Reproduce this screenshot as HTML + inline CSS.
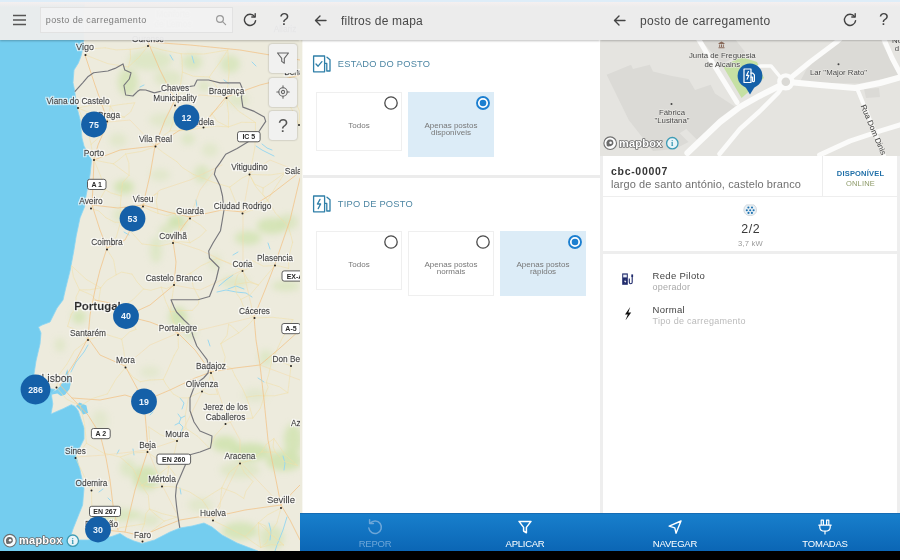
<!DOCTYPE html>
<html lang="pt">
<head>
<meta charset="utf-8">
<title>posto de carregamento</title>
<style>
*{box-sizing:border-box;margin:0;padding:0}
html,body{width:900px;height:560px;overflow:hidden;background:#000;font-family:"Liberation Sans",sans-serif;}
#app{position:relative;width:900px;height:560px;overflow:hidden;background:#000}
.panel{position:absolute;top:0;height:551px;overflow:hidden}
#p1{left:0;width:300px;background:#ecede1}
#p2{left:300px;width:300px;background:#fff}
#p3{left:600px;width:300px;background:#eeeeee}
.hdr{position:absolute;left:0;top:0;width:100%;height:40px;background:#ececec;box-shadow:0 1px 2px rgba(0,0,0,.25);z-index:5}
.hdr .t{position:absolute;top:13.5px;font-size:12px;color:#484848;letter-spacing:.22px;white-space:nowrap}
.topstrip{position:absolute;left:0;top:0;width:900px;height:2px;background:#deedf8;z-index:9}
.abs{position:absolute}
.bar{position:absolute;left:0;bottom:0;width:100%;height:38px;background:linear-gradient(#187fcc,#0b66b5);border-top:1px solid #166cb4;z-index:6}
.bar .b{position:absolute;top:-1px;width:150px;height:38px;text-align:center;color:#fff;font-size:9.5px;letter-spacing:-.25px}
.bar .b span{position:absolute;left:0;width:100%;top:25px;line-height:12px}
.bar .b svg{position:absolute;left:50%;top:5px;margin-left:-9px}
.sec-t{position:absolute;font-size:9.3px;color:#4d86a3;letter-spacing:.23px;white-space:nowrap}
.card{position:absolute;width:86px;background:#fff;border:1px solid #efefef;font-size:8px;color:#777;text-align:center;line-height:7px}
.card.sel{background:#dcecf7;border-color:#dcecf7}
.card svg{position:absolute;left:65.5px;top:2.2px}
.card .l{position:absolute;left:0;width:100%;top:28.5px}
.mlab{font-family:"Liberation Sans",sans-serif;fill:#2a2a2a;stroke:#2a2a2a;stroke-width:.3px;font-size:7.5px;text-anchor:middle}
.shield{font-family:"Liberation Sans",sans-serif;fill:#2a2a2a;font-size:7px;font-weight:bold;text-anchor:middle}
.cl{font-family:"Liberation Sans",sans-serif;fill:#eef5fc;font-size:8.8px;font-weight:bold;text-anchor:middle}
.fb{width:28px;height:29px;background:#f1f1f0;border-radius:3px;box-shadow:0 0 2px rgba(0,0,0,.35);text-align:center;z-index:4}
.fb svg{margin-top:7px}
</style>
</head>
<body>
<div id="app">
<div class="topstrip"></div>
<div class="abs" style="left:0;top:2px;width:900px;height:5px;background:linear-gradient(rgba(246,240,240,.9),rgba(240,236,236,0));z-index:9"></div>

<!-- PANEL 1 : MAP -->
<div class="panel" id="p1">
<svg class="abs" style="left:0;top:0" width="300" height="551" viewBox="0 0 300 551">
<defs><filter id="bl" x="-50%" y="-50%" width="200%" height="200%"><feGaussianBlur stdDeviation="3"/></filter><filter id="halo" x="-2%" y="-2%" width="104%" height="104%"><feMorphology in="SourceAlpha" operator="dilate" radius=".8" result="d"/><feGaussianBlur in="d" stdDeviation=".35" result="b"/><feFlood flood-color="#fff" flood-opacity=".8"/><feComposite in2="b" operator="in" result="h"/><feMerge><feMergeNode in="h"/><feMergeNode in="SourceGraphic"/></feMerge></filter></defs>
<rect width="300" height="551" fill="#edebdd"/>
<g filter="url(#bl)" fill="#cde2ab"><ellipse cx="150" cy="60" rx="22" ry="10" opacity="0.45"/><ellipse cx="192" cy="62" rx="10" ry="8" opacity="0.6"/><ellipse cx="230" cy="64" rx="10" ry="9" opacity="0.6"/><ellipse cx="128" cy="82" rx="10" ry="14" opacity="0.65"/><ellipse cx="168" cy="78" rx="14" ry="8" opacity="0.4"/><ellipse cx="204" cy="86" rx="6" ry="5" opacity="0.5"/><ellipse cx="165" cy="120" rx="16" ry="7" opacity="0.35"/><ellipse cx="238" cy="100" rx="10" ry="7" opacity="0.4"/><ellipse cx="118" cy="140" rx="9" ry="7" opacity="0.35"/><ellipse cx="124" cy="187" rx="10" ry="7" opacity="0.8"/><ellipse cx="202" cy="174" rx="8" ry="9" opacity="0.55"/><ellipse cx="188" cy="139" rx="7" ry="6" opacity="0.45"/><ellipse cx="160" cy="175" rx="10" ry="6" opacity="0.35"/><ellipse cx="177" cy="222" rx="9" ry="7" opacity="0.85"/><ellipse cx="166" cy="232" rx="7" ry="8" opacity="0.5"/><ellipse cx="156" cy="250" rx="6" ry="13" opacity="0.45"/><ellipse cx="248" cy="238" rx="13" ry="7" opacity="0.7"/><ellipse cx="272" cy="226" rx="15" ry="8" opacity="0.75"/><ellipse cx="288" cy="222" rx="10" ry="8" opacity="0.5"/><ellipse cx="235" cy="282" rx="14" ry="6" opacity="0.4"/><ellipse cx="286" cy="286" rx="14" ry="5" opacity="0.55"/><ellipse cx="178" cy="317" rx="9" ry="10" opacity="0.8"/><ellipse cx="190" cy="332" rx="6" ry="7" opacity="0.5"/><ellipse cx="266" cy="358" rx="7" ry="8" opacity="0.45"/><ellipse cx="215" cy="262" rx="6" ry="8" opacity="0.35"/><ellipse cx="79" cy="317" rx="7" ry="7" opacity="0.7"/><ellipse cx="60" cy="345" rx="5" ry="7" opacity="0.4"/><ellipse cx="120" cy="215" rx="7" ry="7" opacity="0.4"/><ellipse cx="100" cy="420" rx="8" ry="10" opacity="0.3"/><ellipse cx="150" cy="372" rx="10" ry="6" opacity="0.3"/><ellipse cx="210" cy="150" rx="8" ry="7" opacity="0.35"/><ellipse cx="146" cy="478" rx="13" ry="12" opacity="0.8"/><ellipse cx="128" cy="468" rx="8" ry="9" opacity="0.45"/><ellipse cx="118" cy="515" rx="24" ry="6" opacity="0.6"/><ellipse cx="150" cy="520" rx="10" ry="6" opacity="0.4"/><ellipse cx="225" cy="444" rx="13" ry="8" opacity="0.8"/><ellipse cx="250" cy="452" rx="20" ry="9" opacity="0.85"/><ellipse cx="284" cy="461" rx="18" ry="10" opacity="0.8"/><ellipse cx="293" cy="440" rx="9" ry="16" opacity="0.75"/><ellipse cx="240" cy="470" rx="20" ry="8" opacity="0.4"/><ellipse cx="240" cy="531" rx="18" ry="9" opacity="0.7"/><ellipse cx="272" cy="538" rx="12" ry="12" opacity="0.55"/><ellipse cx="200" cy="505" rx="12" ry="7" opacity="0.35"/><ellipse cx="255" cy="395" rx="12" ry="7" opacity="0.3"/></g>
<path d="M-3.0 -3.0 L84.0 -3.0 L83.7 40.0 L83.0 48.0 L81.0 56.0 L78.4 63.0 L74.0 70.0 L73.0 82.6 L74.8 91.6 L75.7 100.5 L77.5 109.4 L80.2 120.0 L82.0 138.0 L84.0 146.0 L91.6 160.0 L90.0 175.0 L88.0 186.0 L86.0 196.0 L84.6 206.7 L80.0 218.0 L76.2 236.0 L73.6 252.0 L70.0 271.0 L65.5 289.0 L63.0 300.0 L57.0 308.0 L50.0 322.0 L42.0 325.0 L38.5 327.0 L41.0 333.0 L40.0 344.0 L36.0 361.0 L34.0 374.0 L36.0 383.0 L46.0 388.0 L55.0 389.5 L52.0 393.0 L51.6 396.0 L52.8 404.0 L51.0 414.0 L63.2 408.7 L71.3 404.7 L75.0 406.4 L78.3 411.0 L80.6 418.0 L84.0 428.0 L84.0 439.0 L79.0 449.0 L75.7 455.3 L79.8 469.0 L84.0 488.5 L82.6 505.0 L77.0 519.0 L73.0 529.0 L70.5 536.5 L75.0 540.0 L88.0 540.0 L100.0 538.0 L111.0 536.7 L120.0 533.5 L127.0 538.0 L134.0 541.0 L142.0 543.5 L154.5 540.0 L170.0 532.0 L180.0 528.0 L192.0 526.0 L204.0 523.0 L212.0 527.0 L222.0 535.0 L237.0 543.0 L250.0 548.0 L258.0 551.0 L259.0 555.0 L-3.0 555.0Z" fill="#74cdef" stroke="#8ad4f2" stroke-width=".8" stroke-linejoin="round"/>
<g fill="#7fd0f0"><path d="M51.6 392.5 L56.2 390 L60.3 386 L63.8 379.7 L67.3 369.3 L68.4 374 L70.7 383.2 L69.6 389 L65 394.8 L60.9 396 L57.4 393.5 L52 394.5Z"/><path d="M76 406 L79.4 402.5 L86.4 405.5 L88 413 L83 414.5 L80 410Z"/></g>
<g fill="none" stroke="#9bd8ef" stroke-width="1" stroke-linecap="round" stroke-linejoin="round"><path d="M217.0 292.0 L226.0 290.0 L236.0 292.0 L246.0 293.0 L252.0 297.0"/><path d="M219.0 286.0 L226.0 280.0 L233.0 275.0"/><path d="M256.0 146.0 L262.0 150.0 L268.0 153.0 L274.0 156.0"/><path d="M287.0 517.0 L283.0 530.0 L277.0 545.0 L275.0 551.0"/><path d="M180.0 398.0 L184.0 403.0 L182.0 409.0"/><path d="M178.0 414.0 L181.0 418.0 L179.0 423.0 L183.0 427.0 L181.0 432.0"/><path d="M181.0 418.0 L185.0 416.0"/><path d="M179.0 423.0 L175.0 425.0"/><path d="M133.0 449.0 L134.0 455.0"/><path d="M108.0 498.0 L111.0 501.0"/><path d="M180.0 488.0 L181.0 494.0"/><path d="M258.0 378.0 L264.0 382.0"/><path d="M262.0 144.0 L267.0 148.0 L272.0 150.0"/><path d="M283.0 456.0 L285.0 463.0 L284.0 470.0"/><path d="M228.0 289.0 L236.0 286.0 L244.0 289.0"/><path d="M268.0 243.0 L270.0 249.0"/><path d="M124.0 232.0 L129.0 235.0"/><path d="M192.0 56.0 L194.0 63.0"/><path d="M140.0 87.0 L144.0 85.0"/><path d="M269.0 523.0 L271.0 531.0 L270.0 540.0"/><path d="M71.0 372.0 L76.0 362.0 L84.0 352.0 L88.0 345.0"/><path d="M99.0 492.0 L103.0 489.0"/><path d="M117.0 454.0 L119.0 450.0"/><path d="M150.0 415.0 L153.0 412.0"/><path d="M208.0 340.0 L210.0 346.0"/><path d="M233.0 255.0 L238.0 252.0"/><path d="M196.0 200.0 L197.0 207.0"/><path d="M224.0 80.0 L229.0 84.0"/><path d="M252.0 62.0 L256.0 66.0"/><path d="M170.0 55.0 L173.0 60.0"/></g>
<g fill="none" stroke="#f1dfa6" stroke-width=".6" stroke-linejoin="round" stroke-linecap="round" opacity=".9"><path d="M85.5 55.0 L92.8 48.7 L105.1 47.8"/><path d="M85.5 55.0 L107.8 63.7 L128.4 66.9"/><path d="M148.0 46.0 L141.1 48.0 L130.2 49.3"/><path d="M148.0 46.0 L139.0 57.2 L128.4 66.9"/><path d="M78.0 108.0 L91.0 113.3 L107.0 121.5"/><path d="M78.0 108.0 L93.9 104.5 L110.3 106.2"/><path d="M78.0 108.0 L87.2 128.6 L91.1 144.4"/><path d="M107.0 121.5 L109.6 111.2 L110.3 106.2"/><path d="M107.0 121.5 L117.0 117.8 L124.2 117.1"/><path d="M175.0 105.5 L174.6 116.6 L170.0 130.9"/><path d="M175.0 105.5 L180.2 87.2 L182.4 72.1"/><path d="M226.5 98.0 L221.9 105.5 L211.7 113.1"/><path d="M226.5 98.0 L217.2 87.4 L209.2 77.0"/><path d="M226.5 98.0 L228.6 114.0 L228.4 126.9"/><path d="M203.5 127.5 L208.4 118.5 L211.7 113.1"/><path d="M203.5 127.5 L216.6 126.2 L228.4 126.9"/><path d="M203.5 127.5 L187.7 130.4 L170.0 130.9"/><path d="M155.5 146.5 L163.2 135.8 L170.0 130.9"/><path d="M155.5 146.5 L163.6 152.8 L177.0 161.8"/><path d="M155.5 146.5 L141.6 151.4 L125.7 154.0"/><path d="M94.0 160.0 L92.5 153.5 L91.1 144.4"/><path d="M94.0 160.0 L102.4 161.7 L113.3 163.8"/><path d="M94.0 160.0 L101.3 177.8 L105.5 189.7"/><path d="M249.5 174.5 L254.5 184.1 L263.2 188.0"/><path d="M249.5 174.5 L242.2 177.9 L229.7 187.1"/><path d="M249.5 174.5 L251.9 163.1 L254.8 147.8"/><path d="M299.0 125.0 L299.9 112.0 L294.8 100.3"/><path d="M299.0 125.0 L293.5 112.2 L283.0 94.3"/><path d="M91.0 208.5 L98.8 210.9 L105.6 217.5"/><path d="M91.0 208.5 L98.4 201.8 L105.5 189.7"/><path d="M143.0 206.5 L151.1 210.7 L158.0 213.3"/><path d="M143.0 206.5 L149.1 197.5 L157.8 193.2"/><path d="M190.0 218.5 L183.1 225.1 L179.3 226.9"/><path d="M190.0 218.5 L181.9 213.0 L174.1 213.3"/><path d="M242.5 213.5 L257.8 208.0 L267.6 200.3"/><path d="M242.5 213.5 L235.5 201.7 L229.7 187.1"/><path d="M173.0 243.0 L180.6 241.7 L190.0 242.7"/><path d="M173.0 243.0 L178.2 231.9 L179.3 226.9"/><path d="M107.0 249.5 L113.6 259.9 L116.2 274.8"/><path d="M107.0 249.5 L116.3 237.1 L120.5 222.2"/><path d="M275.0 265.5 L280.6 266.3 L288.7 268.5"/><path d="M275.0 265.5 L263.3 266.2 L252.9 260.8"/><path d="M275.0 265.5 L267.3 274.4 L258.5 285.0"/><path d="M242.5 271.0 L249.2 268.0 L252.9 260.8"/><path d="M242.5 271.0 L237.5 274.9 L235.0 284.3"/><path d="M174.0 285.0 L166.3 288.7 L161.2 287.2"/><path d="M174.0 285.0 L180.9 277.7 L190.8 273.1"/><path d="M174.0 285.0 L172.3 296.5 L170.4 311.8"/><path d="M254.5 318.0 L248.4 325.0 L238.8 332.8"/><path d="M254.5 318.0 L244.8 310.3 L240.8 299.4"/><path d="M178.0 335.0 L178.5 347.9 L174.0 355.6"/><path d="M178.0 335.0 L174.5 324.7 L170.4 311.8"/><path d="M88.0 340.0 L98.3 336.2 L103.5 333.5"/><path d="M88.0 340.0 L78.5 331.0 L67.6 326.3"/><path d="M125.5 367.5 L132.8 377.1 L140.3 381.7"/><path d="M125.5 367.5 L123.9 351.4 L121.7 339.2"/><path d="M211.0 373.0 L216.4 367.8 L223.7 365.0"/><path d="M211.0 373.0 L207.9 385.1 L202.0 391.5"/><path d="M291.0 366.0 L280.9 361.7 L271.9 360.6"/><path d="M291.0 366.0 L289.3 380.4 L287.8 392.8"/><path d="M56.5 387.5 L59.7 373.8 L66.9 364.1"/><path d="M56.5 387.5 L66.6 399.2 L80.2 405.9"/><path d="M202.0 391.5 L195.5 394.4 L188.4 397.9"/><path d="M202.0 391.5 L208.8 394.5 L217.6 394.3"/><path d="M225.5 424.0 L237.0 419.2 L252.8 418.1"/><path d="M225.5 424.0 L215.2 435.4 L209.8 448.6"/><path d="M177.0 441.0 L180.4 433.9 L186.0 428.4"/><path d="M177.0 441.0 L174.7 452.0 L168.7 466.5"/><path d="M147.5 452.0 L149.6 438.9 L148.7 426.9"/><path d="M147.5 452.0 L157.6 459.4 L168.7 466.5"/><path d="M75.5 458.0 L79.6 452.1 L86.4 443.2"/><path d="M75.5 458.0 L83.5 474.7 L91.5 490.5"/><path d="M240.0 463.5 L244.3 472.5 L253.0 481.5"/><path d="M240.0 463.5 L251.6 459.9 L261.7 451.9"/><path d="M91.5 490.5 L91.9 511.0 L97.1 526.7"/><path d="M162.0 486.5 L168.7 486.5 L176.6 487.2"/><path d="M162.0 486.5 L154.5 488.0 L141.6 485.3"/><path d="M281.0 508.0 L267.5 514.9 L258.4 522.7"/><path d="M281.0 508.0 L276.9 523.0 L269.5 534.4"/><path d="M213.0 520.5 L207.6 507.7 L202.3 500.1"/><path d="M213.0 520.5 L220.0 506.8 L221.8 487.9"/><path d="M213.0 520.5 L229.2 528.3 L245.0 536.5"/><path d="M142.5 541.5 L141.9 530.3 L144.4 523.8"/><path d="M142.5 541.5 L151.3 531.4 L164.3 521.1"/><path d="M124.2 117.1 L114.9 113.6 L110.3 106.2"/><path d="M124.2 117.1 L130.6 112.0 L134.7 102.8"/><path d="M209.2 77.0 L193.3 76.2 L182.4 72.1"/><path d="M179.3 226.9 L178.4 218.5 L174.1 213.3"/><path d="M190.0 242.7 L185.6 233.6 L179.3 226.9"/><path d="M293.8 63.8 L289.2 79.2 L283.0 94.3"/><path d="M293.8 63.8 L294.0 83.7 L294.8 100.3"/><path d="M263.2 188.0 L262.8 194.3 L267.6 200.3"/><path d="M120.2 457.0 L132.0 453.1 L147.5 452.0"/><path d="M120.2 457.0 L132.7 468.2 L141.6 485.3"/><path d="M120.2 457.0 L103.5 453.1 L86.4 443.2"/><path d="M206.1 230.3 L200.8 225.3 L190.0 218.5"/><path d="M206.1 230.3 L200.4 236.4 L190.0 242.7"/><path d="M182.4 72.1 L182.1 60.1 L181.2 53.8"/><path d="M216.9 258.5 L230.9 263.6 L242.5 271.0"/><path d="M216.9 258.5 L201.0 265.8 L190.8 273.1"/><path d="M121.7 339.2 L129.7 331.8 L136.0 329.4"/><path d="M121.7 339.2 L110.9 335.9 L103.5 333.5"/><path d="M157.8 193.2 L156.3 200.4 L158.0 213.3"/><path d="M246.5 397.2 L256.8 395.6 L264.5 395.8"/><path d="M246.5 397.2 L249.0 404.7 L252.8 418.1"/><path d="M176.6 487.2 L174.7 474.2 L168.7 466.5"/><path d="M176.6 487.2 L189.4 491.8 L202.3 500.1"/><path d="M294.8 100.3 L288.7 95.9 L283.0 94.3"/><path d="M148.7 426.9 L160.5 434.7 L177.0 441.0"/><path d="M79.5 289.9 L76.0 297.1 L76.2 307.6"/><path d="M79.5 289.9 L89.6 289.8 L100.7 287.8"/><path d="M79.5 289.9 L91.9 295.1 L99.0 304.5"/><path d="M238.8 332.8 L231.0 325.7 L228.6 324.4"/><path d="M238.8 332.8 L230.4 337.8 L220.8 343.7"/><path d="M267.6 200.3 L255.9 186.8 L249.5 174.5"/><path d="M220.8 343.7 L227.0 335.4 L228.6 324.4"/><path d="M220.8 343.7 L225.2 356.9 L223.7 365.0"/><path d="M190.8 273.1 L193.2 286.6 L199.3 298.3"/><path d="M258.4 522.7 L265.4 525.8 L269.5 534.4"/><path d="M258.4 522.7 L252.7 528.9 L245.0 536.5"/><path d="M258.4 522.7 L258.8 534.1 L260.7 547.5"/><path d="M163.3 379.4 L165.9 384.2 L173.2 394.0"/><path d="M163.3 379.4 L149.3 380.1 L140.3 381.7"/><path d="M141.6 485.3 L148.3 495.4 L149.4 509.0"/><path d="M141.6 485.3 L154.3 477.8 L168.7 466.5"/><path d="M253.0 481.5 L245.9 491.2 L243.8 498.4"/><path d="M100.7 287.8 L99.0 298.7 L99.0 304.5"/><path d="M100.7 287.8 L106.6 280.5 L116.2 274.8"/><path d="M193.2 174.3 L182.3 167.5 L177.0 161.8"/><path d="M193.2 174.3 L213.3 182.3 L229.7 187.1"/><path d="M136.0 329.4 L129.6 316.9 L124.8 304.9"/><path d="M287.8 392.8 L274.7 395.8 L264.5 395.8"/><path d="M287.8 392.8 L279.5 386.8 L266.3 382.6"/><path d="M174.0 355.6 L167.7 370.2 L163.3 379.4"/><path d="M273.9 438.6 L273.1 446.6 L275.3 452.1"/><path d="M273.9 438.6 L266.7 443.9 L261.7 451.9"/><path d="M142.0 243.9 L132.6 233.6 L120.5 222.2"/><path d="M142.0 243.9 L159.3 246.1 L173.0 243.0"/><path d="M66.9 364.1 L74.6 350.5 L88.0 340.0"/><path d="M128.4 66.9 L130.6 57.9 L130.2 49.3"/><path d="M105.6 217.5 L114.8 222.3 L120.5 222.2"/><path d="M134.7 102.8 L120.3 104.5 L110.3 106.2"/><path d="M260.7 547.5 L266.9 542.4 L269.5 534.4"/><path d="M260.7 547.5 L254.8 543.6 L245.0 536.5"/><path d="M161.2 287.2 L150.8 290.3 L143.5 289.0"/><path d="M161.2 287.2 L165.6 301.2 L170.4 311.8"/><path d="M129.1 175.3 L118.7 167.7 L113.3 163.8"/><path d="M129.1 175.3 L128.9 163.1 L125.7 154.0"/><path d="M129.1 175.3 L122.5 182.8 L121.1 195.9"/><path d="M255.5 122.5 L255.4 133.1 L254.8 147.8"/><path d="M255.5 122.5 L241.5 122.3 L228.4 126.9"/><path d="M255.5 122.5 L238.4 111.0 L226.5 98.0"/><path d="M181.2 53.8 L162.2 49.9 L148.0 46.0"/><path d="M264.5 395.8 L268.2 387.2 L266.3 382.6"/><path d="M125.7 154.0 L119.0 159.6 L113.3 163.8"/><path d="M261.7 451.9 L266.9 452.2 L275.3 452.1"/><path d="M252.8 418.1 L260.2 408.6 L264.5 395.8"/><path d="M99.0 304.5 L86.3 306.5 L76.2 307.6"/><path d="M107.4 393.9 L92.3 398.5 L80.2 405.9"/><path d="M107.4 393.9 L116.1 378.8 L125.5 367.5"/><path d="M288.7 268.5 L288.6 257.7 L292.6 242.3"/><path d="M283.6 544.9 L274.7 537.0 L269.5 534.4"/><path d="M283.6 544.9 L270.7 544.7 L260.7 547.5"/><path d="M283.6 544.9 L271.2 534.7 L258.4 522.7"/><path d="M288.3 226.3 L291.4 237.2 L292.6 242.3"/><path d="M288.3 226.3 L275.6 213.2 L267.6 200.3"/><path d="M91.1 144.4 L101.1 135.5 L107.0 121.5"/><path d="M202.3 500.1 L214.3 492.4 L221.8 487.9"/><path d="M258.5 285.0 L248.6 280.8 L242.5 271.0"/><path d="M258.5 285.0 L250.1 294.8 L240.8 299.4"/><path d="M209.8 448.6 L198.0 436.6 L186.0 428.4"/><path d="M235.0 284.3 L236.5 293.5 L240.8 299.4"/><path d="M235.0 284.3 L249.4 282.3 L258.5 285.0"/><path d="M86.4 443.2 L84.5 423.7 L80.2 405.9"/><path d="M144.4 523.8 L145.9 513.6 L149.4 509.0"/><path d="M228.4 126.9 L217.3 121.4 L211.7 113.1"/><path d="M176.9 517.1 L172.5 518.5 L164.3 521.1"/><path d="M176.9 517.1 L162.4 513.7 L149.4 509.0"/><path d="M105.5 189.7 L110.5 192.8 L121.1 195.9"/><path d="M132.0 274.1 L121.5 272.1 L116.2 274.8"/><path d="M132.0 274.1 L137.1 281.9 L143.5 289.0"/><path d="M149.4 509.0 L157.0 515.9 L164.3 521.1"/><path d="M170.4 311.8 L182.5 310.5 L192.3 310.4"/><path d="M124.8 304.9 L133.0 299.7 L143.5 289.0"/><path d="M124.8 304.9 L110.7 305.1 L99.0 304.5"/><path d="M67.6 326.3 L71.4 314.1 L76.2 307.6"/><path d="M186.0 428.4 L185.4 414.5 L188.4 397.9"/><path d="M199.3 298.3 L198.4 304.0 L192.3 310.4"/><path d="M173.2 394.0 L180.3 397.9 L188.4 397.9"/><path d="M221.8 487.9 L235.1 492.9 L243.8 498.4"/><path d="M221.8 487.9 L228.9 472.8 L240.0 463.5"/><path d="M285.0 172.7 L271.9 182.2 L263.2 188.0"/><path d="M285.0 172.7 L275.7 186.9 L267.6 200.3"/><path d="M285.0 172.7 L269.8 175.0 L249.5 174.5"/><path d="M71.6 265.9 L73.4 276.6 L79.5 289.9"/><path d="M71.6 265.9 L86.3 279.4 L100.7 287.8"/><path d="M97.1 526.7 L118.5 527.9 L144.4 523.8"/><path d="M297.4 465.4 L283.6 461.3 L275.3 452.1"/><path d="M297.4 465.4 L284.9 454.4 L273.9 438.6"/><path d="M174.1 213.3 L167.1 215.6 L158.0 213.3"/><path d="M227.8 50.0 L220.2 61.8 L209.2 77.0"/><path d="M227.8 50.0 L203.9 54.0 L181.2 53.8"/><path d="M227.8 50.0 L229.1 72.1 L226.5 98.0"/><path d="M105.1 47.8 L116.2 49.9 L130.2 49.3"/><path d="M168.7 466.5 L167.4 477.5 L162.0 486.5"/><path d="M223.7 365.0 L231.5 368.2 L235.1 376.0"/><path d="M266.3 382.6 L268.9 373.7 L271.9 360.6"/><path d="M292.9 319.6 L272.5 317.3 L254.5 318.0"/><path d="M292.9 319.6 L281.7 339.3 L271.9 360.6"/><path d="M120.5 222.2 L120.4 206.2 L121.1 195.9"/><path d="M120.5 222.2 L132.5 214.3 L143.0 206.5"/><path d="M235.1 376.0 L242.4 388.3 L246.5 397.2"/><path d="M217.6 394.3 L213.7 381.0 L211.0 373.0"/></g>
<g fill="none" stroke="#f4dcae" stroke-width=".6" stroke-linejoin="round" stroke-linecap="round"><path d="M108.0 122.0 L130.0 120.0 L155.0 146.0"/><path d="M175.0 100.0 L200.0 95.0 L226.0 97.0"/><path d="M173.0 241.0 L200.0 250.0 L243.0 270.0 L254.0 317.0"/><path d="M174.0 285.0 L200.0 290.0 L243.0 270.0"/><path d="M178.0 333.0 L200.0 330.0 L254.0 317.0"/><path d="M148.0 450.0 L178.0 440.0 L203.0 390.0"/><path d="M148.0 450.0 L162.0 485.0 L180.0 520.0"/><path d="M76.0 457.0 L105.0 455.0 L148.0 450.0"/><path d="M92.0 488.0 L110.0 480.0"/><path d="M243.0 212.0 L243.0 270.0"/><path d="M226.0 414.0 L240.0 440.0 L240.0 462.0 L213.0 517.0"/><path d="M211.0 372.0 L226.0 414.0"/><path d="M240.0 462.0 L281.0 505.0"/><path d="M260.0 365.0 L300.0 380.0"/><path d="M125.0 366.0 L150.0 345.0 L178.0 333.0"/><path d="M143.0 205.0 L160.0 190.0 L190.0 180.0 L222.0 165.0"/><path d="M190.0 217.0 L200.0 190.0 L215.0 170.0"/><path d="M250.0 173.0 L270.0 160.0 L300.0 172.0"/><path d="M250.0 173.0 L243.0 212.0"/></g>
<g fill="none" stroke="#f2c58c" stroke-width=".9" stroke-linejoin="round" stroke-linecap="round" opacity=".9"><path d="M85.0 55.0 L95.0 85.0 L108.0 122.0 L98.0 145.0 L94.0 160.0"/><path d="M94.0 160.0 L93.0 185.0 L92.0 205.0 L100.0 230.0 L107.0 248.0 L100.0 270.0 L95.0 290.0 L90.0 315.0 L88.0 338.0 L75.0 362.0 L60.0 385.0"/><path d="M92.0 205.0 L118.0 208.0 L143.0 205.0 L168.0 212.0 L190.0 217.0 L222.0 210.0 L243.0 212.0 L270.0 195.0 L300.0 172.0"/><path d="M95.0 300.0 L110.0 303.0 L126.0 316.0 L150.0 305.0 L174.0 285.0 L176.0 262.0 L173.0 241.0 L182.0 228.0 L190.0 217.0"/><path d="M60.0 385.0 L72.0 398.0 L88.0 415.0 L100.0 434.0 L106.0 458.0 L110.0 480.0 L113.0 505.0 L118.0 530.0"/><path d="M85.0 528.0 L105.0 530.0 L125.0 532.0 L142.0 536.0 L160.0 528.0 L180.0 520.0 L198.0 517.0 L213.0 517.0 L245.0 510.0 L281.0 505.0"/><path d="M72.0 398.0 L100.0 400.0 L125.0 395.0 L144.0 401.0 L170.0 390.0 L195.0 378.0 L211.0 372.0 L235.0 368.0 L260.0 365.0 L280.0 348.0 L300.0 330.0"/><path d="M94.0 160.0 L120.0 150.0 L155.0 146.0 L180.0 130.0 L203.0 125.0 L226.0 97.0"/><path d="M143.0 205.0 L150.0 175.0 L155.0 146.0 L165.0 120.0 L175.0 100.0 L160.0 70.0 L148.0 42.0"/><path d="M281.0 505.0 L274.0 470.0 L268.0 440.0 L264.0 400.0 L260.0 365.0 L256.0 340.0 L254.0 317.0 L265.0 290.0 L275.0 264.0 L290.0 220.0 L300.0 178.0"/><path d="M126.0 316.0 L150.0 322.0 L178.0 333.0 L195.0 350.0 L211.0 372.0"/><path d="M144.0 401.0 L146.0 425.0 L148.0 450.0 L135.0 490.0 L125.0 532.0"/><path d="M107.0 248.0 L125.0 240.0 L143.0 205.0"/><path d="M88.0 338.0 L100.0 355.0 L125.0 366.0 L144.0 401.0"/><path d="M281.0 505.0 L295.0 490.0 L300.0 485.0"/><path d="M281.0 505.0 L290.0 520.0 L300.0 540.0"/><path d="M226.0 97.0 L260.0 85.0 L300.0 75.0"/><path d="M148.0 42.0 L190.0 45.0 L240.0 50.0 L300.0 60.0"/></g>
<path d="M74.8 91.6 L82.9 82.6 L88.2 76.4 L93.6 72.8 L107.9 71.0 L115.0 68.4 L123.0 63.9 L124.8 70.0 L131.0 72.8 L129.3 79.0 L123.9 85.3 L125.7 95.0 L132.9 96.0 L137.3 91.6 L140.0 89.8 L145.7 90.0 L154.3 92.9 L165.7 90.0 L185.7 87.1 L194.3 85.7 L197.1 80.0 L208.6 80.0 L220.0 82.9 L240.0 82.9 L242.9 90.0 L241.4 97.1 L242.9 107.1 L254.3 111.4 L264.3 117.1 L265.7 121.4 L257.1 134.3 L248.6 141.4 L237.1 148.6 L225.7 154.3 L220.0 162.9 L215.7 168.6 L214.3 174.3 L220.0 185.7 L222.5 196.0 L224.0 210.0 L222.0 222.0 L220.5 230.7 L213.0 243.0 L208.7 251.0 L209.5 258.0 L219.0 267.5 L216.0 280.0 L209.5 296.5 L198.0 299.7 L171.0 299.7 L174.0 307.0 L176.5 312.0 L184.0 320.0 L190.0 325.7 L193.0 336.0 L196.8 346.0 L202.0 353.0 L207.0 359.7 L209.0 367.0 L208.0 373.0 L203.6 378.0 L197.0 383.0 L193.4 389.0 L190.0 398.0 L190.0 410.7 L194.0 422.0 L200.0 431.0 L212.0 436.0 L211.5 442.0 L210.4 448.0 L200.0 452.0 L190.0 454.8 L184.0 468.0 L176.5 485.4 L175.5 496.0 L176.5 505.7 L178.0 517.0 L179.8 527.8" fill="none" stroke="#77777c" stroke-width="1.15" stroke-linejoin="round"/>
<g fill="#222"><circle cx="85.5" cy="55" r="1"/><circle cx="148" cy="46" r="1"/><circle cx="78" cy="108" r="1"/><circle cx="107" cy="121.5" r="1"/><circle cx="175" cy="105.5" r="1"/><circle cx="226.5" cy="98" r="1"/><circle cx="203.5" cy="127.5" r="1"/><circle cx="155.5" cy="146.5" r="1"/><circle cx="94" cy="160" r="1"/><circle cx="249.5" cy="174.5" r="1"/><circle cx="299" cy="125" r="1"/><circle cx="91" cy="208.5" r="1"/><circle cx="143" cy="206.5" r="1"/><circle cx="190" cy="218.5" r="1"/><circle cx="242.5" cy="213.5" r="1"/><circle cx="173" cy="243" r="1"/><circle cx="107" cy="249.5" r="1"/><circle cx="275" cy="265.5" r="1"/><circle cx="242.5" cy="271" r="1"/><circle cx="174" cy="285" r="1"/><circle cx="254.5" cy="318" r="1"/><circle cx="178" cy="335" r="1"/><circle cx="88" cy="340" r="1"/><circle cx="125.5" cy="367.5" r="1"/><circle cx="211" cy="373" r="1"/><circle cx="291" cy="366" r="1"/><circle cx="56.5" cy="387.5" r="1"/><circle cx="202" cy="391.5" r="1"/><circle cx="225.5" cy="424" r="1"/><circle cx="177" cy="441" r="1"/><circle cx="147.5" cy="452" r="1"/><circle cx="75.5" cy="458" r="1"/><circle cx="240" cy="463.5" r="1"/><circle cx="91.5" cy="490.5" r="1"/><circle cx="162" cy="486.5" r="1"/><circle cx="281" cy="508" r="1"/><circle cx="213" cy="520.5" r="1"/><circle cx="142.5" cy="541.5" r="1"/></g>
<g filter="url(#halo)">
<text class="mlab" x="85" y="50" style="font-size:9px">Vigo</text>
<text class="mlab" x="173" y="17" style="font-size:8.5px">Monforte</text>
<text class="mlab" x="173" y="27" style="font-size:8.5px">de Lemos</text>
<text class="mlab" x="285" y="32" style="font-size:8.3px">Allariz</text>
<text class="mlab" x="148" y="42" style="font-size:8.3px">Ourense</text>
<text class="mlab" x="78" y="103.5" style="font-size:8.3px">Viana do Castelo</text>
<text class="mlab" x="109" y="118" style="font-size:8.3px">Braga</text>
<text class="mlab" x="175" y="90.5" style="font-size:8.3px">Chaves</text>
<text class="mlab" x="175" y="100.5" style="font-size:8.3px">Municipality</text>
<text class="mlab" x="226.5" y="93.5" style="font-size:8.3px">Bragança</text>
<text class="mlab" x="196" y="124.5" style="font-size:8.3px">Mirandela</text>
<text class="mlab" x="155.5" y="142" style="font-size:8.3px">Vila Real</text>
<text class="mlab" x="94" y="155.5" style="font-size:8.5px">Porto</text>
<text class="mlab" x="249.5" y="170" style="font-size:8.3px">Vitigudino</text>
<text class="mlab" x="306" y="173.5" style="font-size:8.5px">Salamanca</text>
<text class="mlab" x="304" y="75" style="font-size:8.3px">Benavente</text>
<text class="mlab" x="91" y="204" style="font-size:8.3px">Aveiro</text>
<text class="mlab" x="143" y="202" style="font-size:8.3px">Viseu</text>
<text class="mlab" x="190" y="214" style="font-size:8.3px">Guarda</text>
<text class="mlab" x="242.5" y="209" style="font-size:8.3px">Ciudad Rodrigo</text>
<text class="mlab" x="173" y="238.5" style="font-size:8.3px">Covilhã</text>
<text class="mlab" x="107" y="245" style="font-size:8.3px">Coimbra</text>
<text class="mlab" x="275" y="261" style="font-size:8.3px">Plasencia</text>
<text class="mlab" x="242.5" y="266.5" style="font-size:8.3px">Coria</text>
<text class="mlab" x="174" y="280.5" style="font-size:8.3px">Castelo Branco</text>
<text class="mlab" x="97.5" y="309.5" style="font-size:11.5px;font-weight:bold">Portugal</text>
<text class="mlab" x="254.5" y="313.5" style="font-size:8.3px">Cáceres</text>
<text class="mlab" x="178" y="330.5" style="font-size:8.3px">Portalegre</text>
<text class="mlab" x="88" y="335.5" style="font-size:8.3px">Santarém</text>
<text class="mlab" x="125.5" y="363" style="font-size:8.3px">Mora</text>
<text class="mlab" x="211" y="368.5" style="font-size:8.3px">Badajoz</text>
<text class="mlab" x="293" y="361.5" style="font-size:8.3px">Don Benito</text>
<text class="mlab" x="57" y="382" style="font-size:10.5px">Lisbon</text>
<text class="mlab" x="202" y="387" style="font-size:8.3px">Olivenza</text>
<text class="mlab" x="225.5" y="410" style="font-size:8.3px">Jerez de los</text>
<text class="mlab" x="225.5" y="419.5" style="font-size:8.3px">Caballeros</text>
<text class="mlab" x="305" y="426" style="font-size:8.3px">Azuaga</text>
<text class="mlab" x="177" y="436.5" style="font-size:8.3px">Moura</text>
<text class="mlab" x="147.5" y="447.5" style="font-size:8.3px">Beja</text>
<text class="mlab" x="75.5" y="453.5" style="font-size:8.3px">Sines</text>
<text class="mlab" x="240" y="459" style="font-size:8.3px">Aracena</text>
<text class="mlab" x="91.5" y="486" style="font-size:8.3px">Odemira</text>
<text class="mlab" x="162" y="482" style="font-size:8.3px">Mértola</text>
<text class="mlab" x="281" y="502.5" style="font-size:9.5px">Seville</text>
<text class="mlab" x="213" y="516" style="font-size:8.3px">Huelva</text>
<text class="mlab" x="142.5" y="537.5" style="font-size:8.3px">Faro</text>
<text class="mlab" x="101.5" y="527" style="font-size:8.3px">Portimão</text>
</g>
<rect x="87.5" y="179.3" width="18.5" height="10.2" rx="2.2" fill="#fff" stroke="#4c4c4c" stroke-width=".9"/><text class="shield" x="96.7" y="186.9">A 1</text>
<rect x="237.5" y="131.6" width="22.6" height="10.2" rx="2.2" fill="#fff" stroke="#4c4c4c" stroke-width=".9"/><text class="shield" x="248.8" y="139.2">IC 5</text>
<rect x="282.0" y="270.9" width="26" height="10.2" rx="2.2" fill="#fff" stroke="#4c4c4c" stroke-width=".9"/><text class="shield" x="295" y="278.5">EX-A</text>
<rect x="281.8" y="323.5" width="18.5" height="10.2" rx="2.2" fill="#fff" stroke="#4c4c4c" stroke-width=".9"/><text class="shield" x="291" y="331.1">A-5</text>
<rect x="91.4" y="428.5" width="18.8" height="10.2" rx="2.2" fill="#fff" stroke="#4c4c4c" stroke-width=".9"/><text class="shield" x="100.8" y="436.1">A 2</text>
<rect x="156.9" y="454.1" width="33.7" height="10.2" rx="2.2" fill="#fff" stroke="#4c4c4c" stroke-width=".9"/><text class="shield" x="173.75" y="461.7">EN 260</text>
<rect x="89.5" y="506.3" width="31" height="10.2" rx="2.2" fill="#fff" stroke="#4c4c4c" stroke-width=".9"/><text class="shield" x="105" y="513.9">EN 267</text>
<circle cx="94" cy="124.5" r="12.9" fill="#1560a8"/><text class="cl" x="94" y="127.6">75</text>
<circle cx="186.5" cy="117.5" r="12.9" fill="#1560a8"/><text class="cl" x="186.5" y="120.6">12</text>
<circle cx="132.5" cy="218.5" r="12.9" fill="#1560a8"/><text class="cl" x="132.5" y="221.6">53</text>
<circle cx="126" cy="316" r="12.9" fill="#1560a8"/><text class="cl" x="126" y="319.1">40</text>
<circle cx="35.5" cy="389.5" r="14.9" fill="#1560a8"/><text class="cl" x="35.5" y="392.6">286</text>
<circle cx="144" cy="401.5" r="12.9" fill="#1560a8"/><text class="cl" x="144" y="404.6">19</text>
<circle cx="98" cy="529.5" r="12.9" fill="#1560a8"/><text class="cl" x="98" y="532.6">30</text>
<g transform="translate(2.5 540.7)"><circle cx="7.4" cy="0" r="6.3" fill="#fff" stroke="#6b6b6b" stroke-width="1.1" opacity=".95"/><path d="M7 -3.6a3.4 3.4 0 0 1 3.4 3.4c0 2.4-3 3.6-5.4 3.4c-1-.1-1.6-1-1.4-2.2a3.4 3.4 0 0 1 3.4-4.6z" fill="#6b6b6b"/><circle cx="7.6" cy="-.4" r="1.3" fill="#fff"/><text x="16.6" y="3.6" style="font-family:'Liberation Sans',sans-serif;font-size:11px;font-weight:bold;fill:#fff;stroke:#6b6b6b;stroke-width:1.6px;paint-order:stroke;stroke-linejoin:round;letter-spacing:.2px">mapbox</text><circle cx="70.3" cy="0" r="5.7" fill="#e8f4f8" stroke="#3d9bb5" stroke-width="1.3"/><text x="70.3" y="3.2" style="font-family:'Liberation Serif',serif;font-size:8.5px;font-weight:bold;fill:#3d9bb5;text-anchor:middle">i</text></g>
</svg>
<div class="hdr" style="background:rgba(236,236,236,.965)">
<svg class="abs" style="left:12px;top:13px" width="15" height="14" viewBox="0 0 15 14" fill="none" stroke="#555" stroke-width="1.5"><path d="M1 2.5h13M1 7h13M1 11.5h13"/></svg>
<div class="abs" style="left:40px;top:6.5px;width:193px;height:26.5px;background:rgba(244,244,244,.75);border:1px solid #e2e2e2"></div>
<div class="abs" style="left:45.8px;top:15px;font-size:9px;color:#7c7c7c;letter-spacing:.39px;white-space:nowrap">posto de carregamento</div>
<svg class="abs" style="left:215px;top:14px" width="12" height="12" viewBox="0 0 12 12" fill="none" stroke="#999" stroke-width="1.2" stroke-linecap="round"><circle cx="5" cy="5" r="3.4"/><path d="M7.6 7.6L10.6 10.6"/></svg>
<svg class="abs" style="left:242px;top:12px" width="16" height="16" viewBox="0 0 16 16" fill="none" stroke="#444" stroke-width="1.4" stroke-linecap="round" stroke-linejoin="round"><path d="M12.6 4.6A5.6 5.6 0 1 0 13.6 8.6"/><path d="M13.2 1.6v3.4h-3.4"/></svg>
<div class="abs" style="left:279.5px;top:9.5px;font-size:17px;color:#444">?</div>

</div>
<div class="abs fb" style="left:269px;top:44px"><svg width="14" height="14" viewBox="0 0 14 14" fill="none" stroke="#666" stroke-width="1.1" stroke-linejoin="round"><path d="M1.5 2h11l-4.2 5.4v4.8l-2.6-1.8v-3z"/></svg></div>
<div class="abs fb" style="left:269px;top:78px"><svg width="14" height="14" viewBox="0 0 14 14" fill="none" stroke="#666" stroke-width="1.1" stroke-linecap="round"><circle cx="7" cy="7" r="4.2"/><circle cx="7" cy="7" r="1.6"/><path d="M7 .8v2M7 11.2v2M.8 7h2M11.2 7h2"/></svg></div>
<div class="abs fb" style="left:269px;top:111px;font-size:18px;color:#555;line-height:30px">?</div>

</div>

<!-- PANEL 2 : FILTERS -->
<div class="panel" id="p2">
<div class="hdr">
<svg class="abs" style="left:13px;top:13px" width="15" height="15" viewBox="0 0 15 15" fill="none" stroke="#444" stroke-width="1.4" stroke-linecap="round" stroke-linejoin="round"><path d="M13 7.5H2.5M7 3L2.5 7.5L7 12"/></svg>
<div class="t" style="left:41px">filtros de mapa</div>
</div>
<div class="abs" style="left:0;top:39px;width:3px;height:474px;background:linear-gradient(90deg,#edebdd 55%,#fff)"></div>
<svg class="abs" style="left:12px;top:54px" width="20" height="20" viewBox="0 0 20 20" fill="none" stroke="#2f7fa8" stroke-width="1.3" stroke-linejoin="round" stroke-linecap="round"><path d="M1.6 2h11v15.8h-11z"/><path d="M4 10l2.1 2.2l3.8-4.6"/><path d="M15 3.2l3 2.6v11.2h-3.2v-7.6h-2.2"/></svg>
<div class="sec-t" style="left:37.8px;top:59.1px">ESTADO DO POSTO</div>
<div class="card" style="left:16px;top:92px;height:59px"><svg width="16" height="16" viewBox="0 0 16 16"><circle cx="8" cy="8" r="6.2" fill="#fff" stroke="#4a4a4a" stroke-width="1.3"/></svg><div class="l">Todos</div></div>
<div class="card sel" style="left:108px;top:92px;height:65px"><svg width="16" height="16" viewBox="0 0 16 16"><circle cx="8" cy="8" r="6" fill="#fff" stroke="#1c7fd0" stroke-width="1.9"/><circle cx="8" cy="8" r="3.3" fill="#1c7fd0"/></svg><div class="l">Apenas postos<br>disponíveis</div></div>
<div class="abs" style="left:3px;top:175px;width:297px;height:3px;background:#ececec"></div>
<svg class="abs" style="left:12px;top:194px" width="20" height="20" viewBox="0 0 20 20" fill="none" stroke="#2f7fa8" stroke-width="1.3" stroke-linejoin="round" stroke-linecap="round"><path d="M1.6 2h11v15.8h-11z"/><path d="M8 5.4l-2.6 4.6h3.2l-2.4 4.6"/><path d="M15 3.2l3 2.6v11.2h-3.2v-7.6h-2.2"/></svg>
<div class="sec-t" style="left:37.8px;top:199.1px">TIPO DE POSTO</div>
<div class="card" style="left:16px;top:231px;height:59px"><svg width="16" height="16" viewBox="0 0 16 16"><circle cx="8" cy="8" r="6.2" fill="#fff" stroke="#4a4a4a" stroke-width="1.3"/></svg><div class="l">Todos</div></div>
<div class="card" style="left:108px;top:231px;height:65px"><svg width="16" height="16" viewBox="0 0 16 16"><circle cx="8" cy="8" r="6.2" fill="#fff" stroke="#4a4a4a" stroke-width="1.3"/></svg><div class="l">Apenas postos<br>normais</div></div>
<div class="card sel" style="left:200px;top:231px;height:65px"><svg width="16" height="16" viewBox="0 0 16 16"><circle cx="8" cy="8" r="6" fill="#fff" stroke="#1c7fd0" stroke-width="1.9"/><circle cx="8" cy="8" r="3.3" fill="#1c7fd0"/></svg><div class="l">Apenas postos<br>rápidos</div></div>
<div class="bar">
<div class="b" style="left:0;color:#6da6d8"><svg width="18" height="18" viewBox="0 0 18 18" fill="none" stroke="#6da6d8" stroke-width="1.5" stroke-linecap="round" stroke-linejoin="round"><path d="M4.2 5.2A6.3 6.3 0 1 1 2.8 10"/><path d="M3.6 1.8v3.8h3.8"/></svg><span>REPOR</span></div>
<div class="b" style="left:150px"><svg width="18" height="18" viewBox="0 0 18 18" fill="none" stroke="#fff" stroke-width="1.5" stroke-linecap="round" stroke-linejoin="round"><path d="M3 3.4h12l-4.6 6v5.4l-2.8-1.8v-3.6z"/></svg><span>APLICAR</span></div>
</div>
</div>

<!-- PANEL 3 : STATION -->
<div class="panel" id="p3">
<div class="hdr">
<svg class="abs" style="left:12px;top:13px" width="15" height="15" viewBox="0 0 15 15" fill="none" stroke="#444" stroke-width="1.4" stroke-linecap="round" stroke-linejoin="round"><path d="M13 7.5H2.5M7 3L2.5 7.5L7 12"/></svg>
<div class="t" style="left:40px;letter-spacing:.34px">posto de carregamento</div>
<svg class="abs" style="left:242px;top:12px" width="16" height="16" viewBox="0 0 16 16" fill="none" stroke="#444" stroke-width="1.4" stroke-linecap="round" stroke-linejoin="round"><path d="M12.6 4.6A5.6 5.6 0 1 0 13.6 8.6"/><path d="M13.2 1.6v3.4h-3.4"/></svg>
<div class="abs" style="left:279px;top:9.5px;font-size:17px;color:#444">?</div>
</div>
<svg class="abs" style="left:0;top:39px" width="300" height="117" viewBox="600 39 300 117">
<rect x="600" y="39" width="300" height="117" fill="#e5e4e0"/>
<g fill="#dbdad6"><path d="M606.6 74.7 L631.0 64.8 L633.0 69.0 L649.8 64.8 L653.0 71.4 L670.8 75.8 L688.5 79.0 L695.0 90.0 L710.6 84.7 L715.0 93.5 L735.0 106.8 L719.5 117.9 L697.3 140.0 L686.3 129.0 L679.6 133.3 L688.5 142.0 L675.0 149.0 L653.0 151.0 L628.8 120.0Z"/><path d="M817.4 58.0 L837.0 42.6 L881.6 42.6 L899.0 75.8 L859.5 83.6 L799.7 82.5 L806.0 70.0Z"/><path d="M864.0 89.0 L879.0 88.0 L880.0 97.0 L866.0 98.0Z"/><path d="M700.0 39.0 L735.0 39.0 L745.0 52.0 L722.0 64.0Z"/></g>
<path d="M722.8 65.9 L741.6 57.0 L757.0 62.0 L764.0 78.0 L741.6 98.0Z" fill="#c5e0a3"/>
<g fill="none" stroke="#fbfbfa" stroke-linecap="round" stroke-linejoin="round"><path d="M698.5 39.0 L712.0 62.0 L737.0 102.4" stroke-width="5"/><path d="M687.4 153.0 L720.0 122.0 L740.0 106.8 L760.0 95.7 L779.8 85.8 L785.8 81.8" stroke-width="6"/><path d="M719.5 154.0 L740.0 129.0 L760.0 111.0 L778.0 93.0 L785.8 81.8" stroke-width="4.5"/><path d="M785.8 81.8 L810.0 62.0 L837.3 41.5 L841.0 38.0" stroke-width="5"/><path d="M785.8 81.8 L820.0 85.0 L855.0 88.0 L880.0 83.0 L901.0 77.0" stroke-width="6"/><path d="M857.3 89.0 L868.0 115.0 L878.0 140.0 L884.5 157.0" stroke-width="4"/><path d="M883.8 39.0 L892.0 58.0 L901.0 75.0" stroke-width="5"/><path d="M819.6 155.0 L850.0 141.0 L880.0 131.0 L901.0 124.5" stroke-width="5"/><path d="M755.0 68.0 L761.0 65.9 L771.0 65.9 L781.0 78.0" stroke-width="3.5"/></g>
<circle cx="785.8" cy="81.8" r="8.6" fill="#fbfbfa"/><circle cx="785.8" cy="81.8" r="4.3" fill="#dad9d5"/>
<text x="722.3" y="58" style="font-family:'Liberation Sans',sans-serif;font-size:7.8px;fill:#484848;text-anchor:middle;paint-order:stroke;stroke:#ecebe7;stroke-width:1.1px;stroke-linejoin:round">Junta de Freguesia</text>
<text x="722.3" y="66.8" style="font-family:'Liberation Sans',sans-serif;font-size:7.8px;fill:#484848;text-anchor:middle;paint-order:stroke;stroke:#ecebe7;stroke-width:1.1px;stroke-linejoin:round">de Alcains</text>
<text x="838.5" y="74.6" style="font-family:'Liberation Sans',sans-serif;font-size:7.8px;fill:#484848;text-anchor:middle;paint-order:stroke;stroke:#ecebe7;stroke-width:1.1px;stroke-linejoin:round">Lar &quot;Major Rato&quot;</text>
<text x="672" y="115" style="font-family:'Liberation Sans',sans-serif;font-size:7.8px;fill:#484848;text-anchor:middle;paint-order:stroke;stroke:#ecebe7;stroke-width:1.1px;stroke-linejoin:round">Fábrica</text>
<text x="672" y="123.4" style="font-family:'Liberation Sans',sans-serif;font-size:7.8px;fill:#484848;text-anchor:middle;paint-order:stroke;stroke:#ecebe7;stroke-width:1.1px;stroke-linejoin:round">&quot;Lusitana&quot;</text>
<text x="897" y="43" style="font-family:'Liberation Sans',sans-serif;font-size:7.8px;fill:#484848;text-anchor:middle;paint-order:stroke;stroke:#ecebe7;stroke-width:1.1px;stroke-linejoin:round">No</text>
<text x="897" y="51" style="font-family:'Liberation Sans',sans-serif;font-size:7.8px;fill:#484848;text-anchor:middle;paint-order:stroke;stroke:#ecebe7;stroke-width:1.1px;stroke-linejoin:round">d</text>
<circle cx="838.5" cy="64.3" r="1" fill="#444"/><circle cx="671.5" cy="104" r="1" fill="#444"/>
<text x="0" y="0" transform="translate(860.5 106) rotate(67)" style="font-family:'Liberation Sans',sans-serif;font-size:7.8px;fill:#484848;text-anchor:middle;paint-order:stroke;stroke:#ecebe7;stroke-width:1.1px;stroke-linejoin:round;text-anchor:start;fill:#444;font-size:8px">Rua Dom Dinis</text>
<g fill="#8a6a5a"><path d="M718.5 43.2l3-1.8l3 1.8v.7h-6z"/><path d="M719.2 44.4h.9v2.6h-.9zM721 44.4h1v2.6h-1zM722.9 44.4h.9v2.6h-.9zM718.5 47.3h6v.9h-6z"/></g>
<path d="M750 94.5l-5.2-8.4h10.4z" fill="#1560a8"/><circle cx="750" cy="75.8" r="12.4" fill="#1560a8"/>
<g fill="none" stroke="#fff" stroke-width="1.2" stroke-linejoin="round" stroke-linecap="round"><path d="M744 69h7v13.5h-7z"/><path d="M748.4 71.6l-1.9 3.8h2.3l-1.7 3.8"/><path d="M751 73.2h1.8l1.6 1.7v5.9q0 .9-.95.9t-.95-.9v-3.6h-1.5"/></g>
<g transform="translate(603 143.2)"><circle cx="7.2" cy="0" r="6.3" fill="#fff" stroke="#6b6b6b" stroke-width="1.1" opacity=".95"/><path d="M7 -3.6a3.4 3.4 0 0 1 3.4 3.4c0 2.4-3 3.6-5.4 3.4c-1-.1-1.6-1-1.4-2.2a3.4 3.4 0 0 1 3.4-4.6z" fill="#6b6b6b"/><circle cx="7.6" cy="-.4" r="1.3" fill="#fff"/><text x="16" y="3.6" style="font-family:'Liberation Sans',sans-serif;font-size:11px;font-weight:bold;fill:#fff;stroke:#6b6b6b;stroke-width:1.6px;paint-order:stroke;stroke-linejoin:round;letter-spacing:.2px">mapbox</text><circle cx="69.3" cy="0" r="5.7" fill="#e8f4f8" stroke="#3d9bb5" stroke-width="1.3"/><text x="69.3" y="3.2" style="font-family:'Liberation Serif',serif;font-size:8.5px;font-weight:bold;fill:#3d9bb5;text-anchor:middle">i</text></g>
</svg>
<div class="abs" style="left:3px;top:156px;width:294px;height:40px;background:#fff"></div>
<div class="abs" style="left:222px;top:156px;width:1px;height:40px;background:#ededed"></div>
<div class="abs" style="left:11px;top:164.5px;font-size:10.5px;font-weight:bold;color:#363636;letter-spacing:.69px">cbc-00007</div>
<div class="abs" style="left:11px;top:177.5px;font-size:11px;color:#707070;letter-spacing:.09px;white-space:nowrap">largo de santo antónio, castelo branco</div>
<div class="abs" style="left:223px;top:169px;width:75px;text-align:center;font-size:7.5px;font-weight:bold;color:#1f6fa8;letter-spacing:.2px">DISPONÍVEL</div>
<div class="abs" style="left:223px;top:179px;width:75px;text-align:center;font-size:7.5px;color:#8d9a68;letter-spacing:.2px">ONLINE</div>
<div class="abs" style="left:3px;top:197px;width:294px;height:54px;background:#fff"></div>
<svg class="abs" style="left:143px;top:203.6px" width="14.4" height="12.4" viewBox="0 0 14.4 12.4"><path d="M3.4 .9h7.6q2.6 2 2.6 5.2a6.4 5.6 0 0 1 -12.8 0q0-3.200 2.600-5.200z" fill="#e9f1f6" stroke="#c4ccd2" stroke-width=".7"/><g fill="#1f72b0"><circle cx="5.4" cy="3.5" r="1.05"/><circle cx="9" cy="3.5" r="1.05"/><circle cx="3.8" cy="6.2" r="1.05"/><circle cx="7.2" cy="6.2" r="1.05"/><circle cx="10.6" cy="6.2" r="1.05"/><circle cx="5.5" cy="8.9" r="1.05"/><circle cx="8.9" cy="8.9" r="1.05"/></g></svg>
<div class="abs" style="left:3px;top:222px;width:295px;text-align:center;font-size:12.4px;letter-spacing:.6px;text-indent:.6px;color:#3a3a3a;line-height:15px">2/2</div>
<div class="abs" style="left:3px;top:240px;width:295px;text-align:center;font-size:7.6px;letter-spacing:.2px;color:#999;line-height:8px">3,7 kW</div>
<div class="abs" style="left:3px;top:254px;width:294px;height:259px;background:#fff"></div>
<svg class="abs" style="left:21px;top:272px" width="14" height="14" viewBox="0 0 14 14"><path d="M1.200 1.400h5.600v11.400h-5.600z" fill="#1f2a6b"/><path d="M2.200 2.600h3.600v2.800h-3.600z" fill="#e8ecf6"/><path d="M4.400 7.200l-1.300 2.500h1.200l-.8 2.100l1.900-2.900h-1.200z" fill="#fff"/><path d="M8.300 6.600v3.600q0 1.500 1.450 1.500t1.450-1.500v-5.600" fill="none" stroke="#1f2a6b" stroke-width="1.100"/><path d="M10.300 2.400h1.800v2.600h-1.800z" fill="#1f2a6b"/></svg>
<div class="abs" style="left:52.6px;top:269.6px;font-size:9.5px;color:#444;letter-spacing:.3px">Rede Piloto</div>
<div class="abs" style="left:52.6px;top:282px;font-size:9px;color:#aaa;letter-spacing:.2px">operador</div>
<svg class="abs" style="left:23.5px;top:306.800px" width="8" height="13.500" viewBox="0 0 8 13.500"><path d="M6.200 0L1 7.400h2.800L1.400 13.500l5.800-8.100H4.300z" fill="#111"/></svg>
<div class="abs" style="left:52.6px;top:303.8px;font-size:9.5px;color:#444;letter-spacing:.3px">Normal</div>
<div class="abs" style="left:52.6px;top:316px;font-size:9px;color:#bbb;letter-spacing:.28px">Tipo de carregamento</div>
<div class="bar">
<div class="b" style="left:0;letter-spacing:-.2px"><svg width="18" height="18" viewBox="0 0 18 18" fill="none" stroke="#fff" stroke-width="1.4" stroke-linecap="round" stroke-linejoin="round"><path d="M15 3L3.2 8.2l5.6 1.6l1.2 5.4z"/></svg><span>NAVEGAR</span></div>
<div class="b" style="left:150px;letter-spacing:-.2px"><svg width="18" height="18" viewBox="0 0 18 18" fill="none" stroke="#fff" stroke-width="1.2" stroke-linecap="round" stroke-linejoin="round"><path d="M5.2 2.200h2.200v5h-2.200zM10.600 2.200h2.200v5h-2.200zM2.800 7.200h12.400M3.800 7.400v1.800q0 4 5.200 4t5.200-4v-1.800M9 13.200v2.800"/></svg><span>TOMADAS</span></div>
</div>
</div>

</div>
</body>
</html>
